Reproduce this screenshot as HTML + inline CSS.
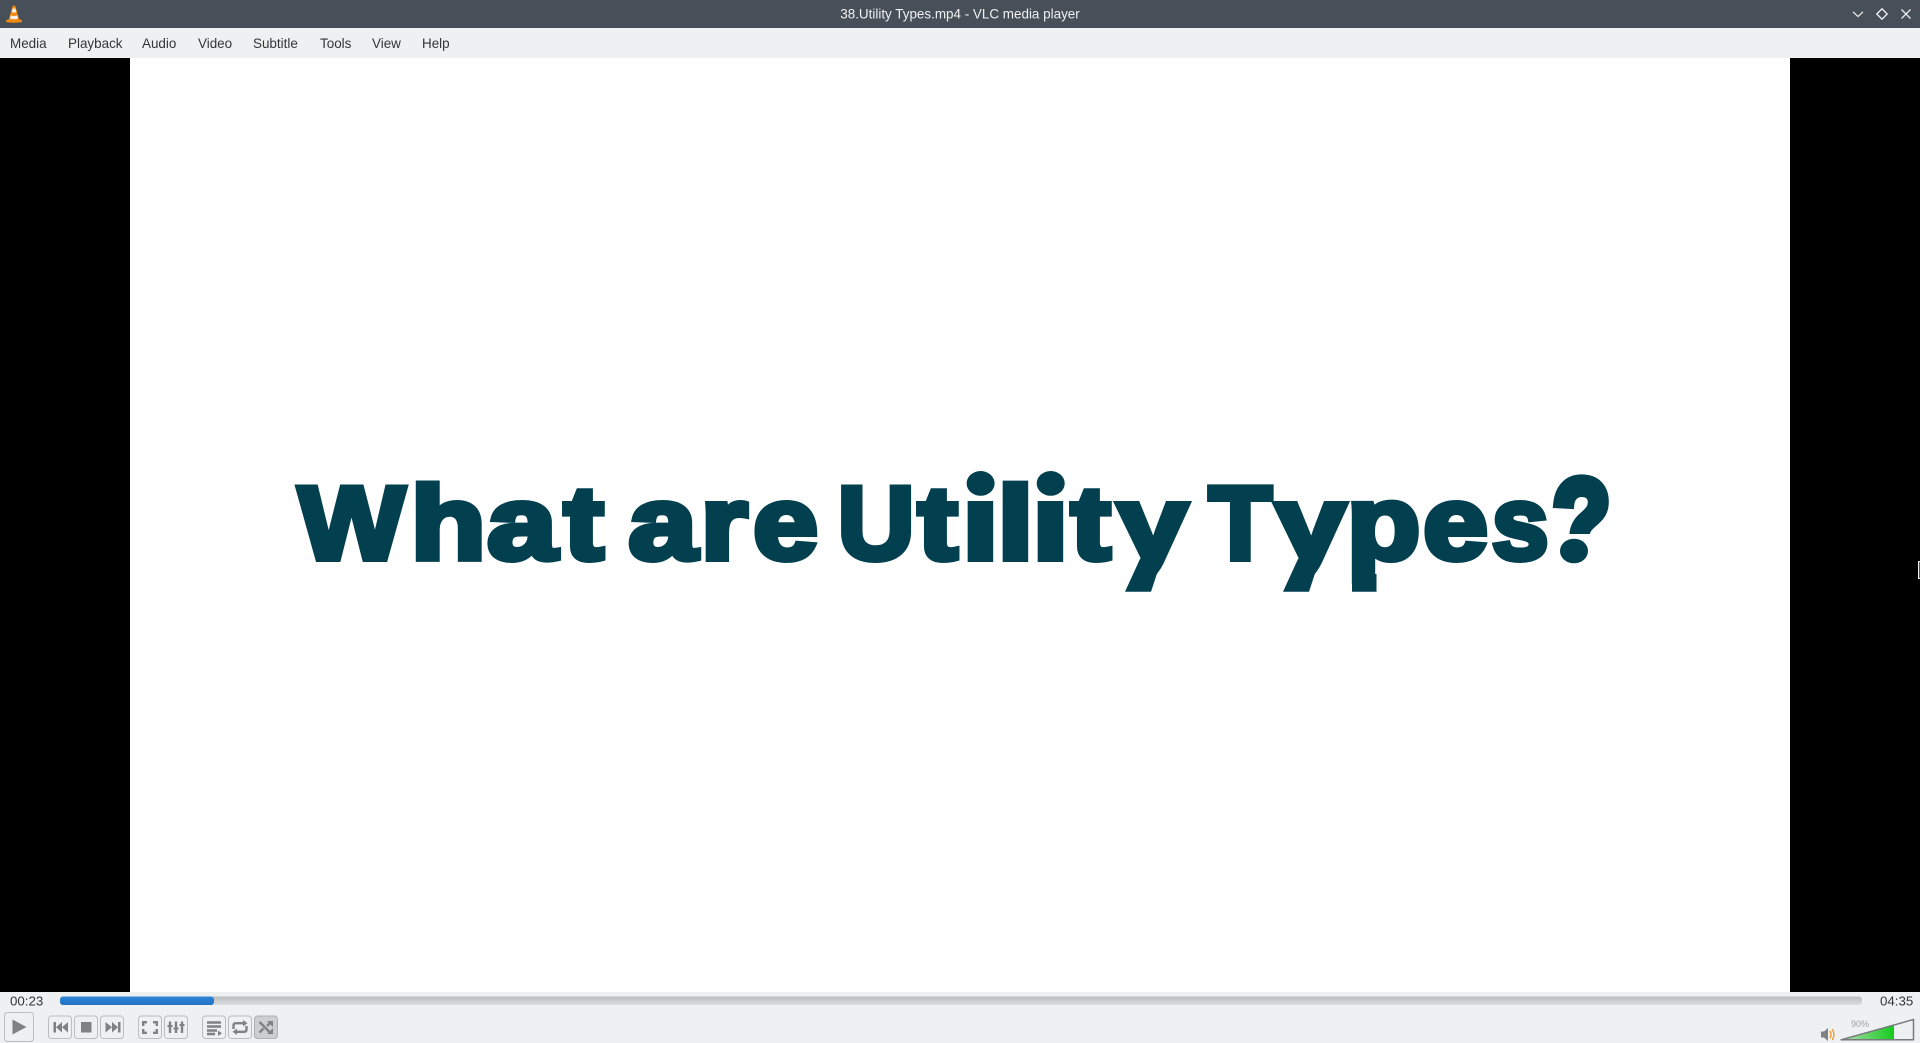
<!DOCTYPE html>
<html><head><meta charset="utf-8"><title>38.Utility Types.mp4 - VLC media player</title>
<style>
html,body{margin:0;padding:0;width:1920px;height:1043px;overflow:hidden;background:#eff0f1}
svg{position:absolute;left:0;top:0;display:block}
.m{font:13.45px "Liberation Sans",sans-serif;fill:#31363b}
.g{font:bold 104px "Liberation Sans",sans-serif;fill:#023f4f;stroke:#023f4f;stroke-width:6;stroke-linejoin:miter}
.b{fill:#eff0f1;stroke:#bcbdbe;stroke-width:1}
.i{fill:#7f8183}
.s{fill:none;stroke:#7f8183;stroke-width:2.4}
</style></head><body>
<svg width="1920" height="1043" viewBox="0 0 1920 1043" xmlns="http://www.w3.org/2000/svg">
<defs>
<linearGradient id="pg" x1="0" y1="0" x2="0" y2="1"><stop offset="0" stop-color="#bcbdbe"/><stop offset="1" stop-color="#dcddde"/></linearGradient>
<linearGradient id="bl" x1="0" y1="0" x2="0" y2="1"><stop offset="0" stop-color="#2f86d6"/><stop offset="1" stop-color="#2172c4"/></linearGradient>
<linearGradient id="gr" x1="0" y1="0" x2="1" y2="0"><stop offset="0" stop-color="#b6dcb6"/><stop offset="1" stop-color="#12cc1c"/></linearGradient>
</defs>
<rect width="1920" height="28" fill="#474f58"/>
<rect y="28" width="1920" height="30" fill="#eff0f1"/>
<rect y="58" width="1920" height="934" fill="#000"/>
<rect x="130" y="58" width="1660" height="934" fill="#fff"/>

<!-- cone -->
<path d="M9 19 L12 8 Q12.500 5.500 14 5.500 Q15.500 5.500 16 8 L19 19 L22 20.500 V22 Q14 23.500 6 22 V20.500 Z" fill="#f08a10"/>
<path d="M11.700 12 L12.700 8.500 H15.300 L16.300 12 C15 12.800 13 12.800 11.700 12Z M10.800 15.300 C13 16.300 15.500 16.300 17.200 15.300 L18 18.500 C15.500 19.500 12.500 19.500 10 18.500Z" fill="#f6f1e8"/>

<text x="960" y="18.500" text-anchor="middle" font-family="Liberation Sans,sans-serif" font-size="13.450" fill="#eff0f1">38.Utility Types.mp4 - VLC media player</text>

<!-- window buttons -->
<path d="M1853 11.800 L1858 16.500 L1863 11.800" fill="none" stroke="#f0f1f2" stroke-width="1.200"/>
<path d="M1876.800 14 L1882 8.800 L1887.200 14 L1882 19.200 Z" fill="none" stroke="#f0f1f2" stroke-width="1.300"/>
<path d="M1901.500 9.500 L1910.500 18.500 M1910.500 9.500 L1901.500 18.500" fill="none" stroke="#f0f1f2" stroke-width="1.300"/>

<!-- menu -->
<text class="m" x="10" y="48">Media</text>
<text class="m" x="68" y="48">Playback</text>
<text class="m" x="142" y="48">Audio</text>
<text class="m" x="198" y="48">Video</text>
<text class="m" x="253" y="48">Subtitle</text>
<text class="m" x="320" y="48">Tools</text>
<text class="m" x="372" y="48">View</text>
<text class="m" x="422" y="48">Help</text>

<!-- headline -->
<g>
<text class="g" transform="translate(298.500,559) scale(1.082,1)">W</text>
<text class="g" transform="translate(410.800,559) scale(1.181,1)">h</text>
<text class="g" transform="translate(487.400,559) scale(1.199,1)">a</text>
<text class="g" transform="translate(564,559) scale(1.141,1)">t</text>
<text class="g" transform="translate(628.600,559) scale(1.181,1)">a</text>
<text class="g" transform="translate(700.800,559) scale(1.156,1)">r</text>
<text class="g" transform="translate(753.200,559) scale(1.117,1)">e</text>
<text class="g" transform="translate(837.800,559) scale(1.022,1)">U</text>
<text class="g" transform="translate(918,559) scale(1.141,1)">t</text>
<text class="g" transform="translate(962.300,559) scale(1.259,1)">i</text>
<text class="g" transform="translate(997.300,559) scale(1.259,1)">l</text>
<text class="g" transform="translate(1032.300,559) scale(1.259,1)">i</text>
<text class="g" transform="translate(1071,559) scale(1.141,1)">t</text>
<text class="g" transform="translate(1117.300,559) scale(1.215,1)">y</text>
<text class="g" transform="translate(1208.900,559) scale(.99,1)">T</text>
<text class="g" transform="translate(1275.300,559) scale(1.215,1)">y</text>
<text class="g" transform="translate(1346.850,559) scale(1.155,1)">p</text>
<text class="g" transform="translate(1423.200,559) scale(1.117,1)">e</text>
<text class="g" transform="translate(1491.900,559) scale(.981,1)">s</text>
<text class="g" style="stroke-width:9" transform="translate(1553,559) scale(.9,1.1)">?</text>
<!-- round dots -->
<rect x="964" y="476" width="34" height="24.800" fill="#fff"/>
<rect x="1034" y="476" width="34" height="24.800" fill="#fff"/>
<rect x="1554" y="534" width="52" height="33" fill="#fff"/>
<ellipse cx="980.600" cy="483.400" rx="14" ry="12.400" fill="#023f4f"/>
<ellipse cx="1050.700" cy="483.400" rx="14" ry="12.400" fill="#023f4f"/>
<ellipse cx="1574" cy="551" rx="14" ry="12.300" fill="#023f4f"/>
<!-- straight descenders -->
<path d="M1114 559.500 H1140 L1125 594 H1114 Z M1272 559.500 H1298 L1283 594 H1272 Z" fill="#fff"/>
<path d="M1125 591.700 H1151 L1168 540 L1140 559 Z M1283 591.700 H1309 L1326 540 L1298 559 Z M1352 574 H1376.500 V591.700 H1352 Z" fill="#023f4f"/>
</g>

<!-- cursor sliver -->
<path d="M1920 561.500 H1918.500 V578.500 H1920" fill="#555" stroke="#eee" stroke-width="1"/>

<!-- time + seek -->
<text x="10" y="1005.500" font-family="Liberation Sans,sans-serif" font-size="13.300" fill="#31363b">00:23</text>
<text x="1880" y="1005.500" font-family="Liberation Sans,sans-serif" font-size="13.300" fill="#31363b">04:35</text>
<rect x="60" y="996.500" width="1802" height="8.500" rx="3" fill="url(#pg)"/>
<rect x="60" y="996.500" width="154" height="8.500" rx="3" fill="url(#bl)"/>

<!-- play -->
<rect class="b" x="4.500" y="1012.500" width="29" height="29" rx="3"/>
<path class="i" d="M12.500 1019.500 L26.500 1027 L12.500 1034.500 Z"/>

<!-- prev stop next -->
<rect class="b" x="48.500" y="1016" width="23" height="22.500" rx="3"/>
<path class="i" d="M53.500 1022 H56 V1032.500 H53.500 Z M62 1022 V1032.500 L56 1027.200 Z M68 1022 V1032.500 L62 1027.200 Z"/>
<rect class="b" x="74.500" y="1016" width="23" height="22.500" rx="3"/>
<rect class="i" x="81" y="1022" width="10.500" height="10.500"/>
<rect class="b" x="100.500" y="1016" width="23" height="22.500" rx="3"/>
<path class="i" d="M118 1022 H120.500 V1032.500 H118 Z M105.500 1022 V1032.500 L112 1027.200 Z M112 1022 V1032.500 L118 1027.200 Z"/>

<!-- fullscreen, ext -->
<rect class="b" x="138.500" y="1016" width="23" height="22.500" rx="3"/>
<path class="s" d="M147 1022.200 H143.200 V1026 M153 1022.200 H156.800 V1026 M143.200 1029 V1032.800 H147 M156.800 1029 V1032.800 H153"/>
<rect class="b" x="164.500" y="1016" width="23" height="22.500" rx="3"/>
<path class="s" d="M170 1021.500 V1033 M176 1021.500 V1033 M182 1021.500 V1033"/>
<path class="i" d="M167.500 1025 H172.500 V1027 H167.500 Z M173.500 1027.500 H178.500 V1029.500 H173.500 Z M179.500 1024 H184.500 V1026 H179.500 Z"/>

<!-- playlist, loop, random -->
<rect class="b" x="202.500" y="1016" width="23" height="22.500" rx="3"/>
<path class="s" d="M207 1022.500 H221 M207 1026.500 H221 M207 1030.500 H217 M207 1034 H215"/>
<path class="i" d="M218 1030.500 L222 1033.200 L218 1036 Z"/>
<rect class="b" x="228.500" y="1016" width="23" height="22.500" rx="3"/>
<path class="s" d="M233.500 1029 V1025.500 Q233.500 1023.200 236 1023.200 H244 M246.500 1026 V1029.500 Q246.500 1031.800 244 1031.800 H236"/>
<path class="i" d="M243 1020 L247.500 1023.200 L243 1026.500 Z M237 1028.500 L232.500 1031.800 L237 1035 Z"/>
<rect x="254.500" y="1016" width="23" height="22.500" rx="3" fill="#cdcecf" stroke="#b0b1b2"/>
<path class="s" d="M259.500 1022 L265 1027.500 L270 1032.500 M259.500 1032.500 L263.500 1028.500 M267 1026 L270.500 1022.500"/>
<path class="i" d="M267 1021 H273 V1027 Z M267 1034 H273 V1028 Z"/>

<!-- speaker -->
<path class="i" d="M1821 1031.500 H1824 L1828 1028 V1041 L1824 1037.500 H1821 Z"/>
<path d="M1830 1031 Q1832 1034.500 1830 1038 M1832.300 1029 Q1835.500 1034.500 1832.300 1040" fill="none" stroke="#f09a30" stroke-width="1.400"/>

<!-- volume -->
<text x="1851" y="1027" font-family="Liberation Sans,sans-serif" font-size="9" fill="#a0a2a4">90%</text>
<path d="M1841 1039.500 L1894 1024.700 V1039.500 Z" fill="url(#gr)"/>
<path d="M1841 1039.800 L1913.500 1019.500 V1039.800 Z" fill="none" stroke="#77797b" stroke-width="1.500" stroke-linejoin="round"/>
</svg>
</body></html>
